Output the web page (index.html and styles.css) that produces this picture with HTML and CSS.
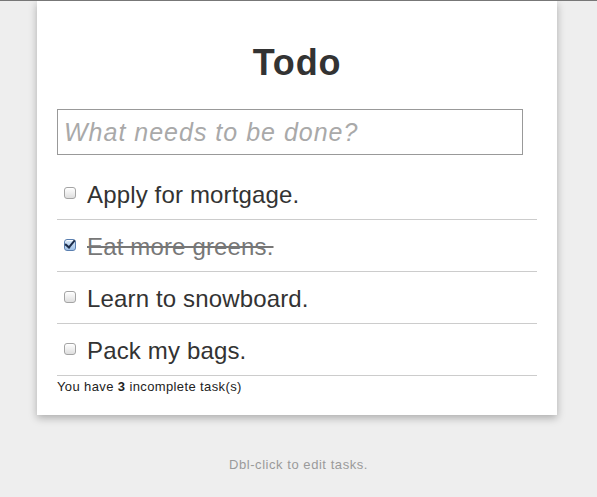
FILE: index.html
```html
<!DOCTYPE html>
<html>
<head>
<meta charset="utf-8">
<title>Todo</title>
<link rel="stylesheet" href="styles.css">
</head>
<body>
<div class="card">
  <h1 class="title">Todo</h1>
  <input class="new-todo" type="text" placeholder="What needs to be done?">
  <ul class="todo-list">
    <li class="todo"><input class="check" type="checkbox"><span class="label">Apply for mortgage.</span></li>
    <li class="todo done"><input class="check" type="checkbox" checked><span class="label">Eat more greens.</span></li>
    <li class="todo"><input class="check" type="checkbox"><span class="label">Learn to snowboard.</span></li>
    <li class="todo"><input class="check" type="checkbox"><span class="label">Pack my bags.</span></li>
  </ul>
  <div class="stats">You have <b>3</b> incomplete task(s)</div>
</div>
<div class="hint">Dbl-click to edit tasks.</div>
</body>
</html>
```
FILE: styles.css
```css
html, body {
  margin: 0;
  padding: 0;
}
body {
  background: #eeeeee;
  border-top: 1px solid #777777;
  font-family: "Liberation Sans", Arial, sans-serif;
  color: #333333;
  height: 496px;
  overflow: hidden;
}
.card {
  width: 480px;
  margin-left: 37px;
  padding: 0 20px 21px;
  background: #ffffff;
  box-shadow: 0 3px 8px rgba(0, 0, 0, 0.28);
  overflow: hidden;
}
.title {
  margin: 42px 0 26px;
  font-size: 36px;
  line-height: 40px;
  font-weight: bold;
  letter-spacing: 0.8px;
  text-align: center;
  color: #333333;
}
.new-todo {
  display: block;
  box-sizing: border-box;
  width: 466px;
  height: 46px;
  margin: 0;
  padding: 0 6px;
  border: 1px solid #999999;
  border-radius: 0;
  font-family: "Liberation Sans", Arial, sans-serif;
  font-size: 25px;
  font-style: italic;
  letter-spacing: 1px;
  color: #333333;
  outline: none;
}
.new-todo::placeholder {
  color: #a9a9a9;
}
.todo-list {
  list-style: none;
  margin: 13px 0 0;
  padding: 0;
}
.todo {
  padding: 13px 0 10px;
  border-bottom: 1px solid #cccccc;
  font-size: 24px;
  line-height: 28px;
  letter-spacing: 0.15px;
  color: #333333;
}
.check {
  -webkit-appearance: none;
  appearance: none;
  box-sizing: border-box;
  width: 12px;
  height: 12px;
  margin: 0 11px 4px 7px;
  padding: 0;
  vertical-align: baseline;
  border: 1px solid #a4a4a4;
  border-radius: 3px;
  background: linear-gradient(#ffffff, #dedede);
  box-shadow: inset 0 1px 1px rgba(255,255,255,0.9);
  overflow: visible;
  position: relative;
}
.check:checked {
  border-color: #5a7fb0;
  background: linear-gradient(#d9e8f8, #9fc0e6);
}
.check:checked::after {
  content: "";
  position: absolute;
  left: 2px;
  top: -2px;
  width: 4px;
  height: 8px;
  border-right: 2px solid #1c2d4a;
  border-bottom: 2px solid #1c2d4a;
  transform: rotate(40deg);
}
.done .label {
  color: #777777;
  text-decoration: line-through;
}
.stats {
  padding-top: 3px;
  font-size: 13px;
  line-height: 15px;
  letter-spacing: 0.38px;
  color: #222222;
}
.hint {
  margin-top: 42px;
  text-align: center;
  font-size: 13px;
  line-height: 15px;
  letter-spacing: 0.55px;
  color: #9a9a9a;
}
```
